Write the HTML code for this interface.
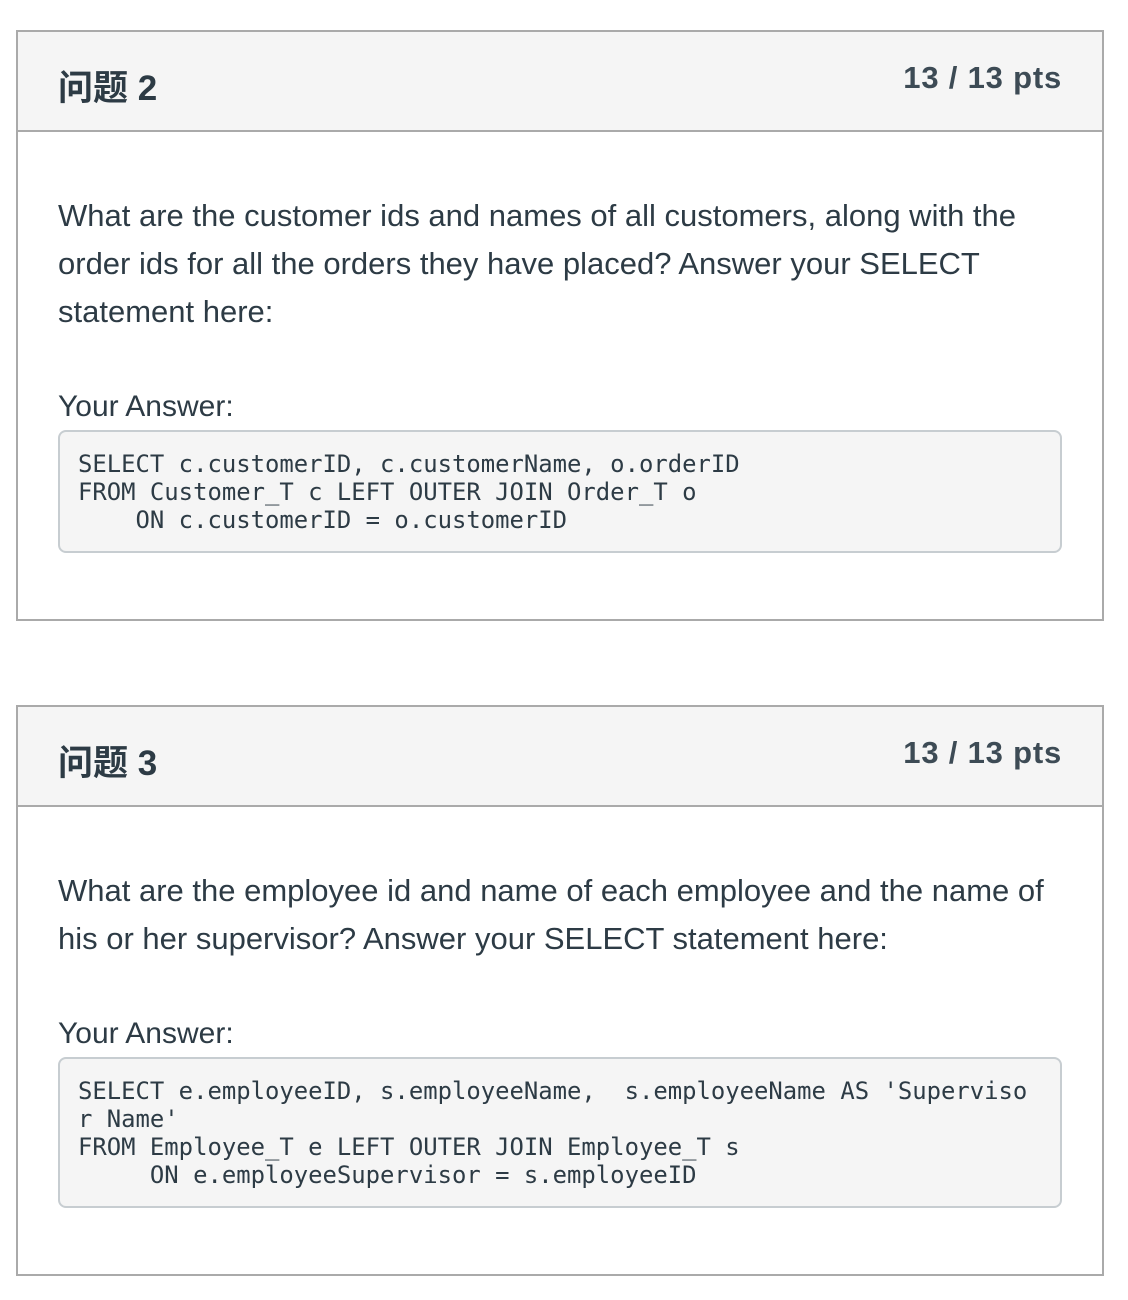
<!DOCTYPE html>
<html><head><meta charset="utf-8"><style>
body{margin:0;background:#fff;font-family:"Liberation Sans","Noto Sans CJK SC",sans-serif;color:#2d3b45;}
.card{position:absolute;left:16px;width:1084px;border:2px solid #aaa;}
.hd{height:98px;background:#f5f5f5;border-bottom:2px solid #aaa;position:relative;}
.hd .t{position:absolute;left:40px;top:28px;font-size:35px;font-weight:bold;}
.hd .p{position:absolute;right:40px;top:28px;font-size:31px;font-weight:bold;color:#3d4b55;letter-spacing:0.8px;}
.q{position:absolute;left:40px;font-size:31px;line-height:48px;width:1040px;white-space:nowrap;}
.ya{position:absolute;left:40px;font-size:30px;}
.code{position:absolute;left:40px;width:1004px;border:2px solid #c7cdd1;border-radius:8px;background:#f5f5f5;padding:18px 0 0 18px;box-sizing:border-box;font-family:"DejaVu Sans Mono",monospace;font-size:23.9px;line-height:28px;white-space:pre;color:#2d3b45;}
</style></head><body>
<div class="card" style="top:30px;height:587px;">
<div class="hd"><div class="t">问题 2</div><div class="p">13 / 13 pts</div></div>
<div class="q" style="top:160px;">What are the customer ids and names of all customers, along with the<br>order ids for all the orders they have placed? Answer your SELECT<br>statement here:</div>
<div class="ya" style="top:358px;">Your Answer:</div>
<div class="code" style="top:398px;height:123px;">SELECT c.customerID, c.customerName, o.orderID
FROM Customer_T c LEFT OUTER JOIN Order_T o
    ON c.customerID = o.customerID</div>
</div>
<div class="card" style="top:705px;height:567px;">
<div class="hd"><div class="t">问题 3</div><div class="p">13 / 13 pts</div></div>
<div class="q" style="top:160px;">What are the employee id and name of each employee and the name of<br>his or her supervisor? Answer your SELECT statement here:</div>
<div class="ya" style="top:310px;">Your Answer:</div>
<div class="code" style="top:350px;height:151px;">SELECT e.employeeID, s.employeeName,  s.employeeName AS 'Superviso
r Name'
FROM Employee_T e LEFT OUTER JOIN Employee_T s
     ON e.employeeSupervisor = s.employeeID</div>
</div>
</body></html>
